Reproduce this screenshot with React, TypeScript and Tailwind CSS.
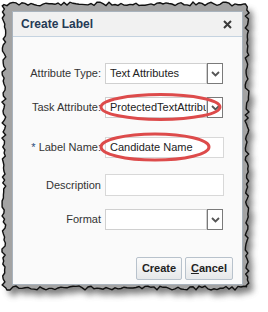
import React from 'react';

function seeded(seed: number) {
  let s = seed;
  return () => {
    s = (s * 9301 + 49297) % 233280;
    return s / 233280;
  };
}

// torn-paper outline around the screenshot
const tornPath = (() => {
  const r = seeded(11);
  const x0 = 4, y0 = 4, x1 = 247, y1 = 288;
  const j = () => (r() - 0.5) * 4;
  const pts: string[] = [];
  for (let x = x0; x < x1; x += 3) pts.push(`${x},${(y0 + j()).toFixed(1)}`);
  for (let y = y0; y < y1; y += 3) pts.push(`${(x1 + j()).toFixed(1)},${y}`);
  for (let x = x1; x > x0; x -= 3) pts.push(`${x},${(y1 + j()).toFixed(1)}`);
  for (let y = y1; y > y0; y -= 3) pts.push(`${(x0 + j()).toFixed(1)},${y}`);
  return 'M' + pts.join('L') + 'Z';
})();

const font = { fontFamily: '"Liberation Sans", Arial, sans-serif' };

function Chevron() {
  return (
    <svg width="9" height="6" viewBox="0 0 9 6">
      <path d="M1 1 L4.5 4.5 L8 1" fill="none" stroke="#555" strokeWidth="1.8" />
    </svg>
  );
}

function Select({ value }: { value?: string }) {
  return (
    <div className="flex h-[21px] w-[118px]">
      <div className="flex h-full w-[102px] items-center overflow-hidden whitespace-nowrap border border-[#d0d0d0] bg-white pl-[4px] text-[11px] text-[#222]">
        {value}
      </div>
      <div className="flex h-full w-[16px] items-center justify-center border border-[#7a7a7a] bg-white">
        <Chevron />
      </div>
    </div>
  );
}

function Input({ value }: { value?: string }) {
  return (
    <div className="flex h-[21px] w-[119px] items-center border border-[#d8d8d8] bg-white pl-[4px] text-[11px] text-[#222]">
      {value}
    </div>
  );
}

function Row({ label, required, children, className }: { label: string; required?: boolean; children: React.ReactNode; className: string }) {
  return (
    <div className={`flex items-center ${className}`}>
      <div className="w-[88px] shrink-0 whitespace-nowrap text-right text-[11px] text-[#333]">
        {required && <span className="mr-[3px] text-[#2a4d7a]">*</span>}
        {label}
      </div>
      <div className="ml-[4px]">{children}</div>
    </div>
  );
}

export default function App() {
  return (
    <div className="relative h-[312px] w-[268px] overflow-hidden bg-white" style={font}>
      <svg className="absolute inset-0" width="268" height="312">
        <defs>
          <filter id="sh" x="-10%" y="-10%" width="130%" height="130%">
            <feGaussianBlur stdDeviation="3" />
          </filter>
        </defs>
        <path d={tornPath} transform="translate(5,6)" fill="#555" opacity="0.75" filter="url(#sh)" />
        <path d={tornPath} fill="#a3a3a3" stroke="#111" strokeWidth="1.4" />
      </svg>

      <div className="relative pl-[12px] pt-[11px]">
        <div className="flex h-[274px] w-[231px] flex-col border border-[#a9b3bd] bg-[#fafafa]">
          {/* Header */}
          <div className="flex h-[25px] shrink-0 items-center justify-between border-b border-[#c5d3e0] bg-[#f1f1f1] pl-[8px] pr-[10px]">
            <span className="text-[12px] font-bold text-[#253a55]">Create Label</span>
            <svg width="9" height="9" viewBox="0 0 9 9">
              <path d="M1 1 L8 8 M8 1 L1 8" stroke="#3a3a3a" strokeWidth="2" />
            </svg>
          </div>

          {/* Form */}
          <div className="flex flex-col pt-[26px]">
            <Row label="Attribute Type:" className="">
              <Select value="Text Attributes" />
            </Row>
            <Row label="Task Attribute:" className="mt-[13px]">
              <Select value="ProtectedTextAttribute" />
            </Row>
            <Row label="Label Name:" required className="mt-[19px]">
              <Input value="Candidate Name" />
            </Row>
            <Row label="Description" className="mt-[16px]">
              <div className="h-[22px] w-[119px] border border-[#d8d8d8] bg-white" />
            </Row>
            <Row label="Format" className="mt-[13px]">
              <Select />
            </Row>
          </div>

          {/* Buttons */}
          <div className="mt-[27px] flex justify-end gap-[3px] pr-[9px]">
            <button className="h-[23px] w-[46px] rounded-[2px] border border-[#b8c2cc] bg-gradient-to-b from-[#fbfbfb] to-[#e6e8ea] text-[11px] font-bold text-[#222]">
              Create
            </button>
            <button className="h-[23px] w-[48px] rounded-[2px] border border-[#b8c2cc] bg-gradient-to-b from-[#fbfbfb] to-[#e6e8ea] text-[11px] font-bold text-[#222]">
              <span className="underline">C</span>ancel
            </button>
          </div>
        </div>
      </div>

      {/* red annotation ellipses */}
      <svg className="pointer-events-none absolute inset-0" width="268" height="312">
        <ellipse cx="160.5" cy="107" rx="59.5" ry="12.5" fill="none" stroke="#dd4b4b" strokeWidth="3" />
        <ellipse cx="155" cy="147" rx="54" ry="13" fill="none" stroke="#dd4b4b" strokeWidth="3" />
      </svg>
    </div>
  );
}
